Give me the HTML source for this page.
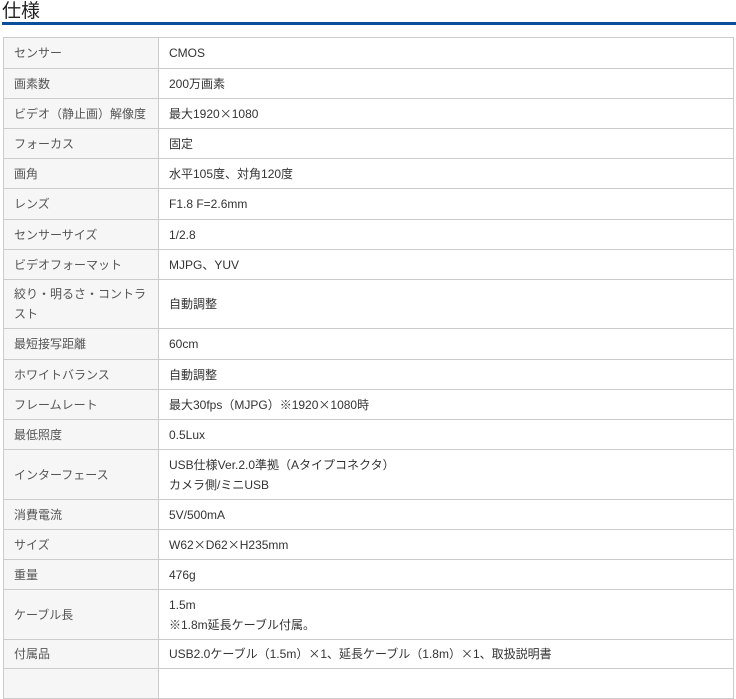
<!DOCTYPE html>
<html><head><meta charset="utf-8"><style>
body{margin:0;background:#fff;font-family:"Liberation Sans","Noto Sans CJK JP",sans-serif;overflow:hidden;height:672px;}
h2{position:absolute;left:2px;top:0;margin:0;font-size:19px;font-weight:normal;color:#222;line-height:24px;}
.bar{position:absolute;left:2px;top:22px;width:734px;height:3px;background:#0b4f9c;}
table{position:absolute;left:3px;top:37px;width:731px;border-collapse:collapse;font-size:12px;}
td{border:1px solid #ccc;padding:0 10px;line-height:20px;vertical-align:middle;color:#333;}
td:first-child{width:134px;background:#f6f6f6;color:#555;}
.x{font-family:"Noto Sans CJK JP",sans-serif;}
</style></head><body>
<h2>仕様</h2><div class="bar"></div>
<table>
<tr style="height:31px"><td>センサー</td><td>CMOS</td></tr>
<tr style="height:30px"><td>画素数</td><td>200万画素</td></tr>
<tr style="height:30px"><td>ビデオ（静止画）解像度</td><td>最大1920<span class="x">×</span>1080</td></tr>
<tr style="height:30px"><td>フォーカス</td><td>固定</td></tr>
<tr style="height:30px"><td>画角</td><td>水平105度、対角120度</td></tr>
<tr style="height:31px"><td>レンズ</td><td>F1.8 F=2.6mm</td></tr>
<tr style="height:30px"><td>センサーサイズ</td><td>1/2.8</td></tr>
<tr style="height:30px"><td>ビデオフォーマット</td><td>MJPG、YUV</td></tr>
<tr style="height:49px"><td>絞り・明るさ・コントラスト</td><td>自動調整</td></tr>
<tr style="height:31px"><td>最短接写距離</td><td>60cm</td></tr>
<tr style="height:30px"><td>ホワイトバランス</td><td>自動調整</td></tr>
<tr style="height:30px"><td>フレームレート</td><td>最大30fps（MJPG）※1920<span class="x">×</span>1080時</td></tr>
<tr style="height:30px"><td>最低照度</td><td>0.5Lux</td></tr>
<tr style="height:50px"><td>インターフェース</td><td>USB仕様Ver.2.0準拠（Aタイプコネクタ）<br>カメラ側/ミニUSB</td></tr>
<tr style="height:30px"><td>消費電流</td><td>5V/500mA</td></tr>
<tr style="height:30px"><td>サイズ</td><td>W62<span class="x">×</span>D62<span class="x">×</span>H235mm</td></tr>
<tr style="height:30px"><td>重量</td><td>476g</td></tr>
<tr style="height:50px"><td>ケーブル長</td><td>1.5m<br>※1.8m延長ケーブル付属。</td></tr>
<tr style="height:29px"><td>付属品</td><td>USB2.0ケーブル（1.5m）<span class="x">×</span>1、延長ケーブル（1.8m）<span class="x">×</span>1、取扱説明書</td></tr>
<tr style="height:30px"><td></td><td></td></tr>
</table>
</body></html>
